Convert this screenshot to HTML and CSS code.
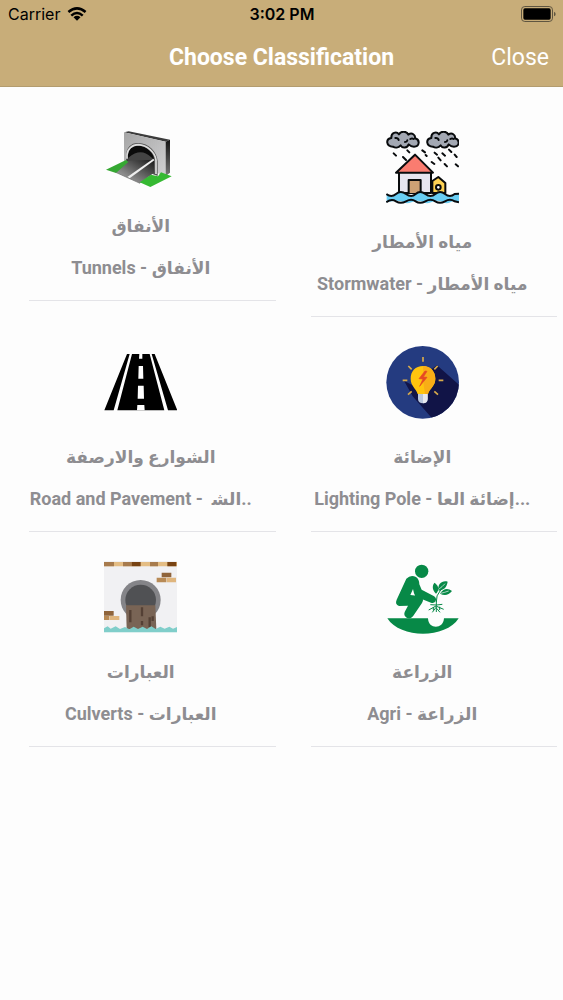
FILE: index.html
```html
<!DOCTYPE html>
<html lang="en">
<head>
    <meta charset="UTF-8">
    <meta name="viewport" content="width=device-width, initial-scale=1.0">
    <title>Choose Classification</title>
    <link rel="stylesheet" href="styles.css">
</head>
<body>
    <header class="header">
        <div class="status-bar">
            <div class="carrier">
                <span>Carrier</span>
                <svg class="wifi" viewBox="0 0 60 44" aria-hidden="true">
                    <g fill="none" stroke="#000" stroke-width="8">
                        <path d="M3 16Q30-7 57 16"/>
                        <path d="M12 27Q30 11 48 27"/>
                    </g>
                    <path d="M19 32Q30 23 41 32L30 43Z"/>
                </svg>
            </div>
            <div class="time">3:02 PM</div>
            <svg class="battery" viewBox="0 0 105 48" aria-hidden="true">
                <rect x="1.5" y="1.5" width="93" height="45" rx="10" fill="none" stroke="#5f5540" stroke-width="3"/>
                <rect x="7" y="7" width="82" height="34" rx="5"/>
                <path d="M99 17q5 2 5 7t-5 7z" fill="#5f5540"/>
            </svg>
        </div>
        <div class="nav-bar">
            <h1>Choose Classification</h1>
            <button class="close" type="button">Close</button>
        </div>
    </header>

    <main class="list">
        <a class="item" href="#tunnels">
            <svg class="icon icon-short" viewBox="28 33 219 171" aria-hidden="true">
                <defs>
                    <linearGradient id="wall" x1="0" y1="0" x2="1" y2="1">
                        <stop offset="0" stop-color="#a5a5a5"/>
                        <stop offset="1" stop-color="#d0d0d2"/>
                    </linearGradient>
                    <linearGradient id="asphalt" x1="1" y1="0" x2="0" y2="1">
                        <stop offset="0" stop-color="#171717"/>
                        <stop offset="1" stop-color="#bcbcbc"/>
                    </linearGradient>
                    <linearGradient id="side" x1="0" y1="0" x2="0" y2="1">
                        <stop offset="0" stop-color="#111"/>
                        <stop offset="1" stop-color="#777"/>
                    </linearGradient>
                </defs>
                <path d="M88 37L102 34L226 59L213 65Z" fill="#3c3c3c"/>
                <path d="M88 37L213 65V168L88 124Z" fill="url(#wall)"/>
                <path d="M213 65L226 59V158L213 168Z" fill="url(#side)"/>
                <path d="M94 123V105C95 82 111 67 132 69C161 70 187 94 189 123V168L94 132Z" fill="#555"/>
                <path d="M99 124V106C100 88 113 76 133 77C157 79 178 100 178 119L112 151Z" fill="#0b0b0b"/>
                <path d="M101 113C127 92 148 92 169 111L178 119L112 151L99 123Z" fill="#444"/>
                <path d="M100 122L178 119V158L136 190L63 157Z" fill="url(#asphalt)"/>
                <path d="M97 116V105C98 87 112 74 131 74C158 75 181 98 184 120V162" fill="none" stroke="#dedede" stroke-width="5"/>
                <path d="M176 116L98 171L105 175L179 121Z" fill="#eee"/>
                <path d="M94 120L101 126L64 159L34 149Z" fill="#35a832"/>
                <path d="M199 157L231 169L167 201L135 187L169 164L190 169Z" fill="#35b932"/>
                <path d="M63 157L136 190" stroke="#656565" stroke-width="2"/>
            </svg>
            <span class="name" lang="ar" dir="rtl">الأنفاق</span>
            <span class="detail">Tunnels - <span class="arabic" lang="ar">الأنفاق</span></span>
        </a>

        <a class="item" href="#stormwater">
            <svg class="icon" viewBox="31 33 219 219" aria-hidden="true">
                <g stroke="#090b0d" stroke-width="6" stroke-linejoin="round" stroke-linecap="round">
                    <path id="cloud" d="M52 80C31 80 29 57 47 54C46 38 62 33 70 43C76 32 94 33 98 44C109 36 120 45 118 55C134 59 132 80 115 80C107 80 103 77 99 73C95 85 80 86 75 76C68 84 58 84 52 80Z" fill="#a3a8b3"/>
                    <path d="M59 54q8-1 10 6M88 66q6 0 7-5M104 57q5-3 10 0" fill="none"/>
                    <use href="#cloud" x="120"/>
                    <path d="M179 54q8-1 10 6M208 66q6 0 7-5M224 57q5-3 10 0" fill="none"/>
                    <path d="M54 100l7 7M95 91l6 6M140 91l8 6M177 98l7 6M200 100l8 7M220 89l7 7M237 104l6 7M82 111l9 9M150 105l3 3M188 113l7 8M168 126l8 6M207 132l7 7M240 133l7 6" fill="none"/>
                    <path d="M70 156V219H166V156" fill="#e7e5ef"/>
                    <path d="M99 219V180H135V219" fill="#cda175"/>
                    <path d="M118 104L172 158H61Z" fill="#fa7c70"/>
                    <path d="M170 219V183L188 171L209 189V219Z" fill="#fed254"/>
                    <circle cx="188" cy="202" r="7" fill="#fff"/>
                </g>
                <path d="M33 222Q48 239 60 222Q75 211 90 222Q105 239 120 222Q135 211 149 222Q164 239 179 222Q193 211 208 222Q223 239 237 222L250 220V246Q237 239 224 247Q210 254 196 244Q181 239 166 247Q151 254 137 244Q122 239 107 247Q91 254 77 244Q62 239 33 247Z" fill="#69cdf3"/>
                <g fill="none" stroke="#080b0e" stroke-width="6">
                    <path d="M32 222Q47 234 61 222T91 222T120 222T149 222T179 222T208 222T237 222L250 221"/>
                    <path d="M32 247Q47 235 61 244T91 244T120 244T149 244T179 244T208 244T237 244L250 247"/>
                </g>
            </svg>
            <span class="name" lang="ar" dir="rtl">مياه الأمطار</span>
            <span class="detail">Stormwater - <span class="arabic" lang="ar">مياه الأمطار</span></span>
        </a>

        <a class="item" href="#roads">
            <svg class="icon" viewBox="28 18 219 219" aria-hidden="true">
                <path d="M97 42H105L57 211H29ZM112 42H165L209 211H68ZM171 42H180L248 211H220Z"/>
                <path d="M134 42H143V56H133ZM132 78H145L146 116H131ZM130 137H147L148 176H129ZM128 195H149L150 211H127Z" fill="#fff"/>
            </svg>
            <span class="name" lang="ar" dir="rtl">الشوارع والارصفة</span>
            <span class="detail">Road and Pavement - &nbsp;<span class="arabic" lang="ar">الش&zwj;</span>..</span>
        </a>

        <a class="item" href="#lighting">
            <svg class="icon" viewBox="31 33 219 219" aria-hidden="true">
                <defs>
                    <clipPath id="disc"><circle cx="141" cy="142" r="109"/></clipPath>
                </defs>
                <circle cx="141" cy="142" r="109" fill="#243b80"/>
                <path d="M169 101L184 91L260 158V252H171L111 184L85 137L109 150Z" fill="#111447" clip-path="url(#disc)"/>
                <path d="M142 66V80M98 93L108 103M186 93L176 103M81 136H95M189 136H203M97 179L108 169M187 179L176 169" stroke="#d7aa4b" stroke-width="5"/>
                <path d="M142 93C119 93 105 109 105 131C105 153 121 160 126 177H157C162 160 179 153 179 131C179 109 164 93 142 93Z" fill="#ffc40e"/>
                <path d="M142 93C164 93 179 109 179 131C179 153 162 160 157 177H148L144 149Z" fill="#f8ad17"/>
                <path d="M148 108L130 131L142 132L132 154L154 127L143 126L154 109Z" fill="#e64924" stroke="#e64924" stroke-width="2"/>
                <path d="M127 177H156V192Q155 205 142 205Q128 205 127 192Z" fill="#bac7dd"/>
                <path d="M142 177H156V192Q155 205 142 205Z" fill="#e8e9ee"/>
            </svg>
            <span class="name" lang="ar" dir="rtl">الإضائة</span>
            <span class="detail">Lighting Pole - <span class="arabic" lang="ar">إضائة العا</span>...</span>
        </a>

        <a class="item" href="#culverts">
            <svg class="icon" viewBox="28 33 219 219" aria-hidden="true">
                <path d="M28 33H247V247H28Z" fill="#f1f1f3"/>
                <path d="M28 36H247V49H28Z" fill="#e4bd84"/>
                <path d="M28 36H58V49H28ZM85 36H111V49H85ZM166 36H190V49H166Z" fill="#a77b4d"/>
                <path d="M111 36H138V49H111ZM218 36H245V49H218Z" fill="#784313"/>
                <path d="M201 68H230V82H201ZM28 183H57V197H28Z" fill="#8f643b"/>
                <path d="M186 83H215V97H186ZM28 198H44V210H28Z" fill="#b88a55"/>
                <path d="M216 83H244V97H216ZM45 198H74V210H45Z" fill="#dfb57d"/>
                <circle cx="138" cy="150" r="60" fill="#848488"/>
                <circle cx="138" cy="150" r="46" fill="#505154"/>
                <path d="M94 166H182L185 238H96Z" fill="#796455"/>
                <path d="M107 180V217M142 172V199M142 213V226M165 202V231M174 199V213" stroke="#544035" stroke-width="7"/>
                <path d="M28 235L39 229L48 236L63 229L76 237L91 231L104 238L117 230L130 237L144 230L157 237L170 229L183 237L197 230L210 236L224 230L235 236L247 231V247H28Z" fill="#80ceca"/>
            </svg>
            <span class="name" lang="ar" dir="rtl">العبارات</span>
            <span class="detail">Culverts - <span class="arabic" lang="ar">العبارات</span></span>
        </a>

        <a class="item" href="#agri">
            <svg class="icon" viewBox="31 33 219 219" aria-hidden="true">
                <g fill="#078947">
                    <circle cx="138" cy="64" r="20"/>
                    <path d="M35 205H157C158 239 203 239 205 205H249C210 267 74 267 35 205Z"/>
                    <path d="M92 86Q105 73 121 81Q131 88 131 103L138 119L174 138Q184 144 180 153Q175 161 166 158L123 141Q117 137 115 130L112 117L104 135L131 138Q148 145 139 159L112 199Q104 209 93 203Q83 197 87 186L97 167L70 168Q57 163 63 149Z"/>
                    <path d="M181 131C167 117 171 103 177 98C191 109 191 120 181 131ZM189 122C184 101 201 90 216 95C213 112 205 120 189 122ZM193 131C202 115 217 113 229 123C218 137 206 138 193 131Z"/>
                </g>
                <g fill="none" stroke="#078947" stroke-width="3">
                    <path d="M182 156Q180 137 195 120"/>
                    <path d="M182 153V186M182 165L164 164M181 168L159 180M181 172L170 187M183 165L200 163M183 169L204 178M183 175L193 187M173 171V181M192 170V180"/>
                </g>
                <path d="M189 118Q200 110 208 101M195 130Q208 127 219 123" fill="none" stroke="#fff" stroke-width="2"/>
            </svg>
            <span class="name" lang="ar" dir="rtl">الزراعة</span>
            <span class="detail">Agri - <span class="arabic" lang="ar">الزراعة</span></span>
        </a>
    </main>
</body>
</html>
```

FILE: styles.css
```css
* {
    box-sizing: border-box;
}

body {
    margin: 0;
    min-height: 100vh;
    background: #fdfdfd;
    font-family: Roboto, "DejaVu Sans", sans-serif;
}

.header {
    background: #c8ad79;
    border-bottom: 1px solid #b39c6f;
}

.status-bar {
    display: grid;
    grid-template-columns: 1fr auto 1fr;
    align-items: center;
    height: 28px;
    padding: 0 7px 0 8px;
    font-family: Inter, sans-serif;
    font-size: 16px;
    color: #000;
}

.carrier {
    display: flex;
    align-items: center;
    gap: 7px;
}

.wifi {
    width: 20px;
    height: 14px;
}

.time {
    font-weight: 600;
}

.battery {
    width: 35px;
    height: 16px;
    justify-self: end;
}

.nav-bar {
    display: grid;
    grid-template-columns: 1fr auto 1fr;
    align-items: center;
    height: 58px;
    padding: 0 14px;
    color: #fff;
}

.nav-bar h1 {
    grid-column: 2;
    margin: 0;
    font-size: 23px;
    font-weight: 700;
}

.close {
    justify-self: end;
    padding: 0;
    border: none;
    background: none;
    color: #fff;
    font-family: inherit;
    font-size: 23px;
    font-weight: 400;
    cursor: pointer;
}

.list {
    display: grid;
    grid-template-columns: 1fr 1fr;
    align-items: start;
    padding-top: 15px;
}

.item {
    display: flex;
    flex-direction: column;
    align-items: center;
    padding-top: 29px;
    color: #8e8d91;
    font-size: 18px;
    font-weight: 700;
    line-height: 42px;
    text-decoration: none;
}

.item::after {
    content: "";
    align-self: stretch;
    height: 1px;
    margin: 11px 6px 0 29px;
    background: #e4e4e8;
}

.icon {
    width: 73px;
    height: 73px;
    margin-bottom: 17px;
}

.icon-short {
    height: 57px;
}

.name,
.detail {
    height: 42px;
    white-space: nowrap;
}

.name,
.arabic {
    font-size: 17px;
}
```
